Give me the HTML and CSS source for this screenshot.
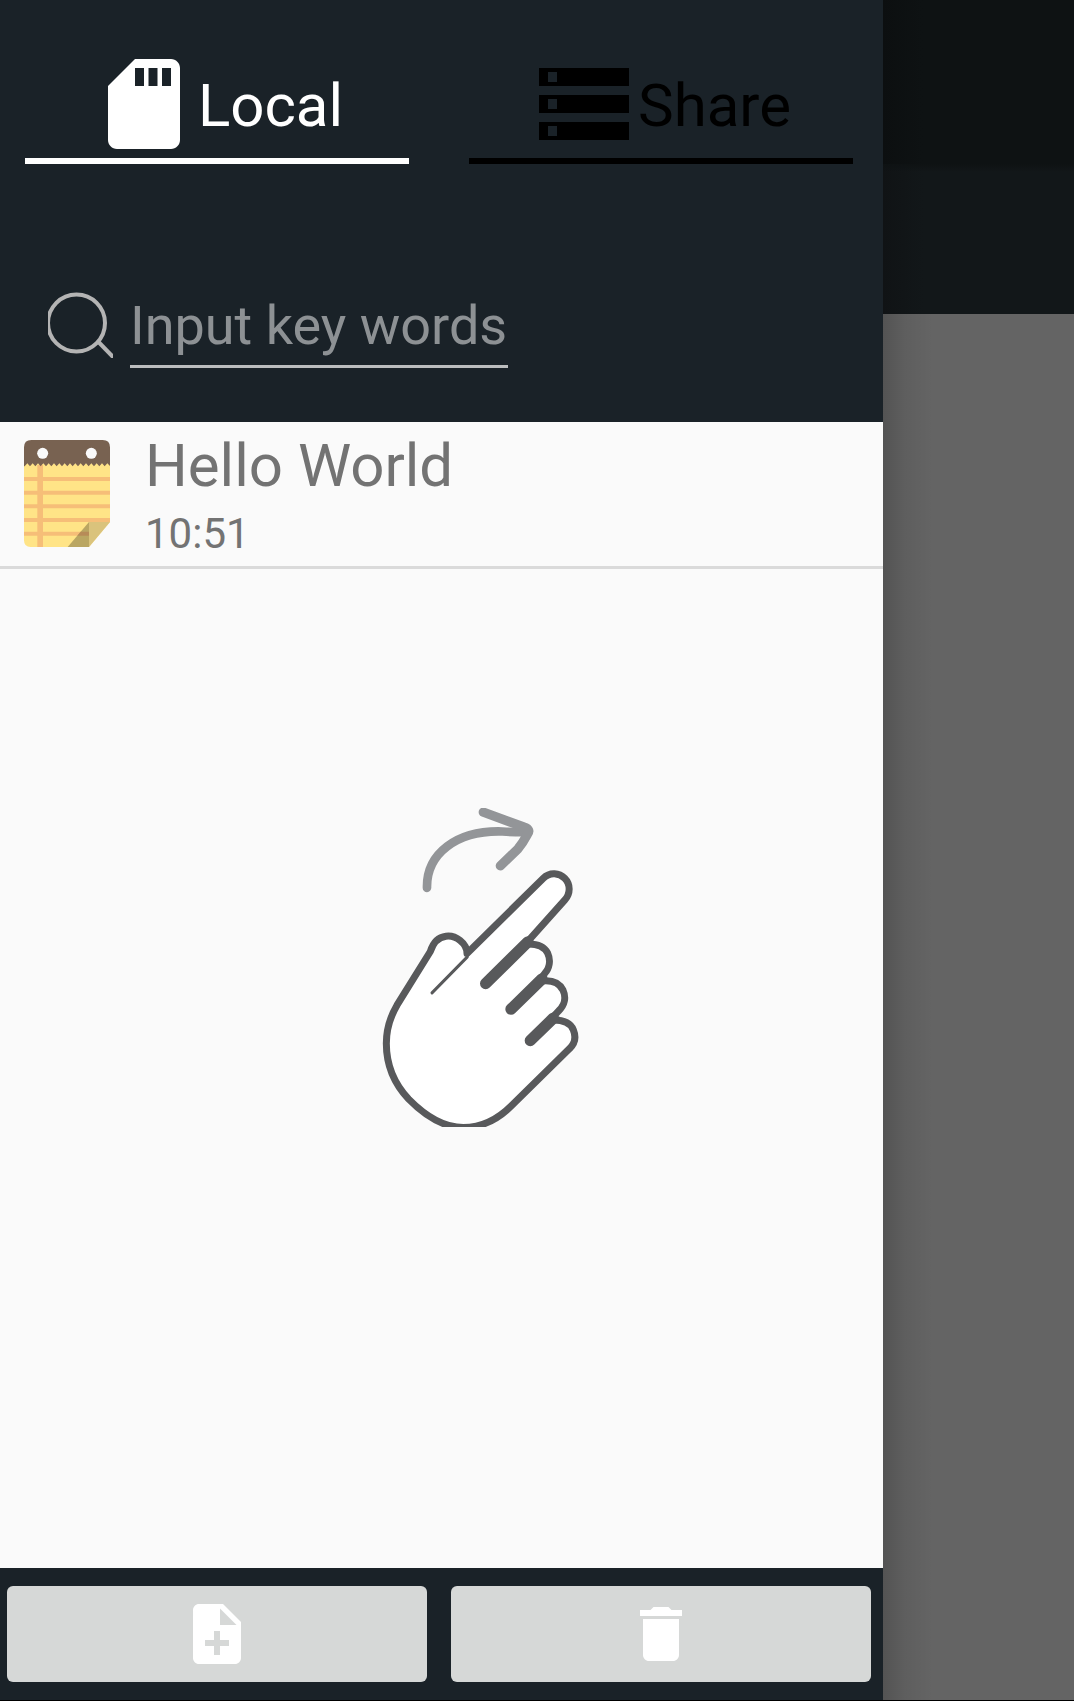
FILE: index.html
```html
<!DOCTYPE html>
<html lang="en">
<head>
<meta charset="utf-8">
<title>Notes</title>
<link rel="stylesheet" href="styles.css">
</head>
<body>
<div class="screen">
  <aside class="drawer">
    <header class="drawer-header">
      <nav class="tabs">
        <a class="tab tab-active">
          <svg class="tab-icon" viewBox="0 0 24 24"><path d="M18 2h-8L4 8v12c0 1.100.9 2 2 2h12c1.100 0 2-.9 2-2V4c0-1.100-.9-2-2-2zm-6 6h-2V4h2v4zm3 0h-2V4h2v4zM18 8h-2V4h2v4z"/></svg>
          <span class="tab-label">Local</span>
        </a>
        <a class="tab">
          <svg class="tab-icon" viewBox="0 0 24 24"><path d="M2 20h20v-4H2v4zm2-3.100h2v2.200H4v-2.200zM2 4v4h20V4H2zm4 3.100H4V4.900h2v2.200zM2 14h20v-4H2v4zm2-3.100h2v2.200H4v-2.200z"/></svg>
          <span class="tab-label">Share</span>
        </a>
      </nav>
      <div class="search">
        <svg class="search-icon" viewBox="0 0 65 66"><circle cx="28.500" cy="31" r="28.500" /><path d="M51 50.500 65 65"/></svg>
        <div class="search-field">Input key words</div>
      </div>
    </header>
    <main class="list">
      <article class="note">
        <svg class="note-icon" viewBox="0 0 258 321">
          <path fill="#ffe487" d="M0 70H258V246L195 321H20Q0 321 0 301Z"/>
          <path fill="#f6be78" d="M0 111h258v12H0zM0 152h258v12H0zM0 193h258v12H0zM0 234h258v12H0zM0 275h195v12H0zM40 75h17v246H40z"/>
          <path fill="#dac37c" d="M195 246h63l-63 75z"/>
          <path fill="#baa662" d="M195 246v75h-64z"/>
          <path fill="#b78b58" d="M170 275h25v12h-35z"/>
          <path fill="#786251" d="M0 22Q0 0 22 0H236Q258 0 258 22V78L250 70 242 79 234 70 226 79 218 70 210 79 202 70 194 79 186 70 178 79 170 70 162 79 154 70 146 79 138 70 130 79 122 70 114 79 106 70 98 79 90 70 82 79 74 70 66 79 58 70 50 79 42 70 34 79 26 70 18 79 10 70 2 79H0Z"/>
          <circle cx="56" cy="40" r="16.500" fill="#fafafa"/><circle cx="202" cy="40" r="16.500" fill="#fafafa"/>
        </svg>
        <div class="note-text">
          <h1 class="note-title">Hello World</h1>
          <time class="note-time">10:51</time>
        </div>
      </article>
      <svg class="swipe-hint" viewBox="0 0 690 956">
        <g transform="translate(0 -54)">
          <path class="hand" d="M291 490 520 264C540 244 568 248 584 264C602 282 602 310 584 330L466 462C494 460 521 466 533 489C543 511 538 534 524 550L506 574C540 568 567 576 579 600C589 622 584 645 566 662L540 690C572 688 600 694 610 719C619 741 614 761 598 776L425 946C393 978 348 1012 280 1012C220 1012 166 978 116 927C72 880 49 825 49 760C49 717 60 681 81 645L181 484C189 458 204 441 228 438C257 434 291 459 291 490Z"/>
          <path class="crease" d="M292 500 186 608"/>
          <path class="finger-gap" d="M474 455 347 580M516 566 423 657M550 684 481 751"/>
          <path class="arrow" d="M171 293C169 192 258 120 397 124Q445 127 473 126"/>
          <path class="arrow arrow-head" d="M340 66 463 111Q484 118 472 133Q458 159 444 176L391 227"/>
        </g>
      </svg>
    </main>
    <footer class="actions">
      <button class="action" aria-label="Add note"><svg class="action-icon" viewBox="0 0 24 24"><path d="M14 2H6c-1.100 0-1.990.9-1.990 2L4 20c0 1.100.89 2 1.990 2H18c1.100 0 2-.9 2-2V8l-6-6zm2 14h-3v3h-2v-3H8v-2h3v-3h2v3h3v2zm-3-7V3.500L18.500 9H13z"/></svg></button>
      <button class="action" aria-label="Delete"><svg class="action-icon" viewBox="0 0 24 24"><path d="M6 19c0 1.100.9 2 2 2h8c1.100 0 2-.9 2-2V7H6v12zM19 4h-3.500l-1-1h-5l-1 1H5v2h14V4z"/></svg></button>
    </footer>
  </aside>
  <div class="scrim">
    <div class="scrim-status"></div>
    <div class="scrim-toolbar"></div>
  </div>
</div>
</body>
</html>
```
FILE: styles.css
```css
* { box-sizing: border-box; }
body { margin: 0; background: #000; font-family: Roboto, sans-serif; }
.screen { display: flex; height: 1700px; }
.drawer { width: 883px; display: flex; flex-direction: column; }

.drawer-header { height: 422px; background: #1a2228; }
.tabs { display: flex; gap: 60px; padding: 50px 30px 0 25px; }
.tab {
  width: 384px; height: 114px; display: flex; justify-content: center;
  padding-right: 1px; border-bottom: 6px solid #000; color: #000;
}
.tab-active { color: #fff; border-color: #fff; }
.tab-icon { width: 108px; height: 108px; fill: currentColor; flex: none; }
.tab-label { font-size: 60px; line-height: 70px; padding-top: 21px; }

.search { display: flex; padding: 127px 0 0 48px; }
.search-icon { width: 65px; height: 66px; margin-top: 1px; flex: none; fill: none; stroke: #b4b4b4; stroke-width: 4; stroke-linecap: round; }
.search-field {
  width: 378px; height: 77px; margin-left: 17px; border-bottom: 3px solid #bbbdbe;
  color: #8d9194; font-size: 54px; line-height: 70px; white-space: nowrap;
}

.list { flex: 1; background: #fafafa; }
.note { height: 147px; display: flex; padding: 18px 0 0 24px; border-bottom: 3px solid #dadada; }
.note-icon { width: 86px; height: 107px; }
.note-text { display: flex; flex-direction: column; margin: -9px 0 0 35px; color: #737373; }
.note-title { margin: 0; font-size: 60px; font-weight: 400; line-height: 70px; }
.note-time { font-size: 42px; line-height: 50px; margin-top: 8px; }

.swipe-hint { display: block; width: 230px; height: 319px; margin: 239px 0 0 370px; fill: none; stroke-linejoin: round; }
.hand { fill: #fff; stroke: #58595b; stroke-width: 21; }
.crease { stroke: #58595b; stroke-width: 9; stroke-linecap: round; }
.finger-gap { stroke: #58595b; stroke-width: 34; stroke-linecap: round; }
.arrow { stroke: #939598; stroke-width: 26; stroke-linecap: round; }
.arrow-head { stroke-width: 28; }

.actions { height: 132px; display: flex; gap: 24px; padding: 18px 12px 18px 7px; background: #1a2228; }
.action {
  flex: 1; display: flex; align-items: center; justify-content: center;
  padding: 0; border: 0; border-radius: 6px; background: #d6d8d7;
}
.action-icon { width: 72px; height: 72px; fill: #fff; }

.scrim {
  flex: 1; display: flex; flex-direction: column;
  background: linear-gradient(90deg, rgba(0, 0, 0, .17), rgba(0, 0, 0, .06) 22px, transparent 50px), #646464;
}
.scrim-status { height: 164px; background: linear-gradient(90deg, #0c0f10, #0e1213 40px); }
.scrim-toolbar {
  height: 150px;
  background: linear-gradient(#0e1213, rgba(14, 18, 19, 0) 8px), linear-gradient(90deg, #101315, #121719 40px);
}
```
